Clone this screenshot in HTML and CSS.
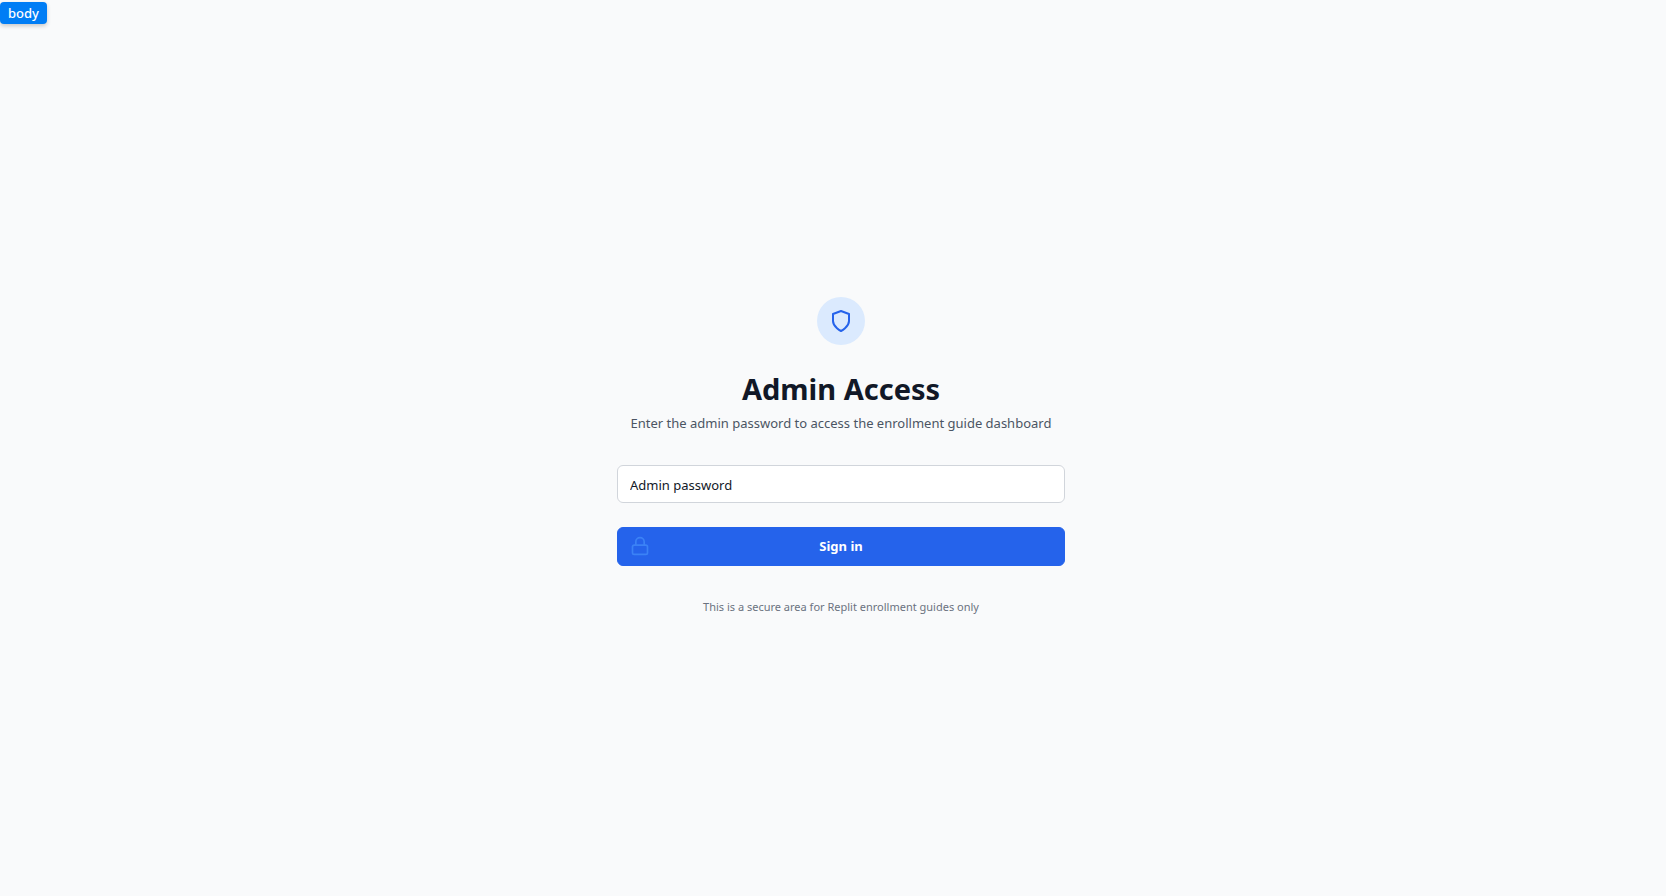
FILE: index.html
```html
<!DOCTYPE html>
<html lang="en">
<head>
<meta charset="utf-8">
<meta name="viewport" content="width=device-width, initial-scale=1">
<title>Admin Access</title>
<link rel="stylesheet" href="styles.css">
</head>
<body>
<div class="tag">body</div>
<main class="page">
  <div class="panel">
    <div class="badge">
      <svg class="badge-icon" viewBox="0 0 24 24" fill="none" stroke="currentColor" stroke-width="2" stroke-linecap="round" stroke-linejoin="round" aria-hidden="true"><path d="M12 22s8-4 8-10V5l-8-3-8 3v7c0 6 8 10 8 10"/></svg>
    </div>
    <h1 class="title">Admin Access</h1>
    <p class="subtitle">Enter the admin password to access the enrollment guide dashboard</p>
    <form class="form">
      <input class="field" type="password" name="password" placeholder="Admin password" aria-label="Admin password">
      <button class="submit" type="button">
        <svg class="lock" viewBox="0 0 24 24" fill="none" stroke="currentColor" stroke-width="2" stroke-linecap="round" stroke-linejoin="round" aria-hidden="true"><rect x="3" y="11" width="18" height="11" rx="2"/><path d="M7 11V7a5 5 0 0 1 10 0v4"/></svg>
        Sign in
      </button>
    </form>
    <p class="note">This is a secure area for Replit enrollment guides only</p>
  </div>
</main>
</body>
</html>
```
FILE: styles.css
```css
* {
  box-sizing: border-box;
}

body {
  margin: 0;
  background: #f9fafb;
  font-family: "Segoe UI", "Noto Sans", "Open Sans", sans-serif;
  font-size: 13px;
  line-height: 20px;
}

.tag {
  position: absolute;
  top: 2px;
  left: 0;
  padding: 0 8px;
  border-radius: 4px;
  background: #007df5;
  box-shadow: 0 2px 4px rgba(0, 0, 0, 0.2);
  color: #fff;
  font-weight: 500;
  line-height: 22px;
}

.page {
  display: flex;
  align-items: center;
  justify-content: center;
  min-height: 100vh;
  padding: 16px 0 0 16px;
}

.panel {
  width: 100%;
  max-width: 448px;
  text-align: center;
}

.badge {
  display: flex;
  align-items: center;
  justify-content: center;
  width: 48px;
  height: 48px;
  margin: 0 auto;
  border-radius: 50%;
  background: #dbeafe;
  color: #2563eb;
}

.badge-icon {
  width: 24px;
  height: 24px;
}

.title {
  margin: 26px 0 0;
  color: #111827;
  font-size: 29px;
  font-weight: 700;
  line-height: 36px;
}

.subtitle {
  margin: 6px 0 0;
  color: #4b5563;
}

.form {
  display: flex;
  flex-direction: column;
  gap: 24px;
  margin-top: 32px;
}

.field {
  width: 100%;
  padding: 9px 12px 7px;
  border: 1px solid #d1d5db;
  border-radius: 6px;
  background: #fff;
  color: #111827;
  font: inherit;
}

.field::placeholder {
  color: #111827;
  opacity: 1;
}

.submit {
  position: relative;
  width: 100%;
  padding: 8px 16px 9px;
  border: 1px solid #2563eb;
  border-radius: 6px;
  background: #2563eb;
  color: #fff;
  font: inherit;
  font-weight: 700;
}

.lock {
  position: absolute;
  top: 8px;
  left: 12px;
  width: 20px;
  height: 20px;
  color: #3b82f6;
}

.note {
  margin: 33px 0 0;
  color: #6b7280;
  font-size: 11px;
  line-height: 16px;
}
```
